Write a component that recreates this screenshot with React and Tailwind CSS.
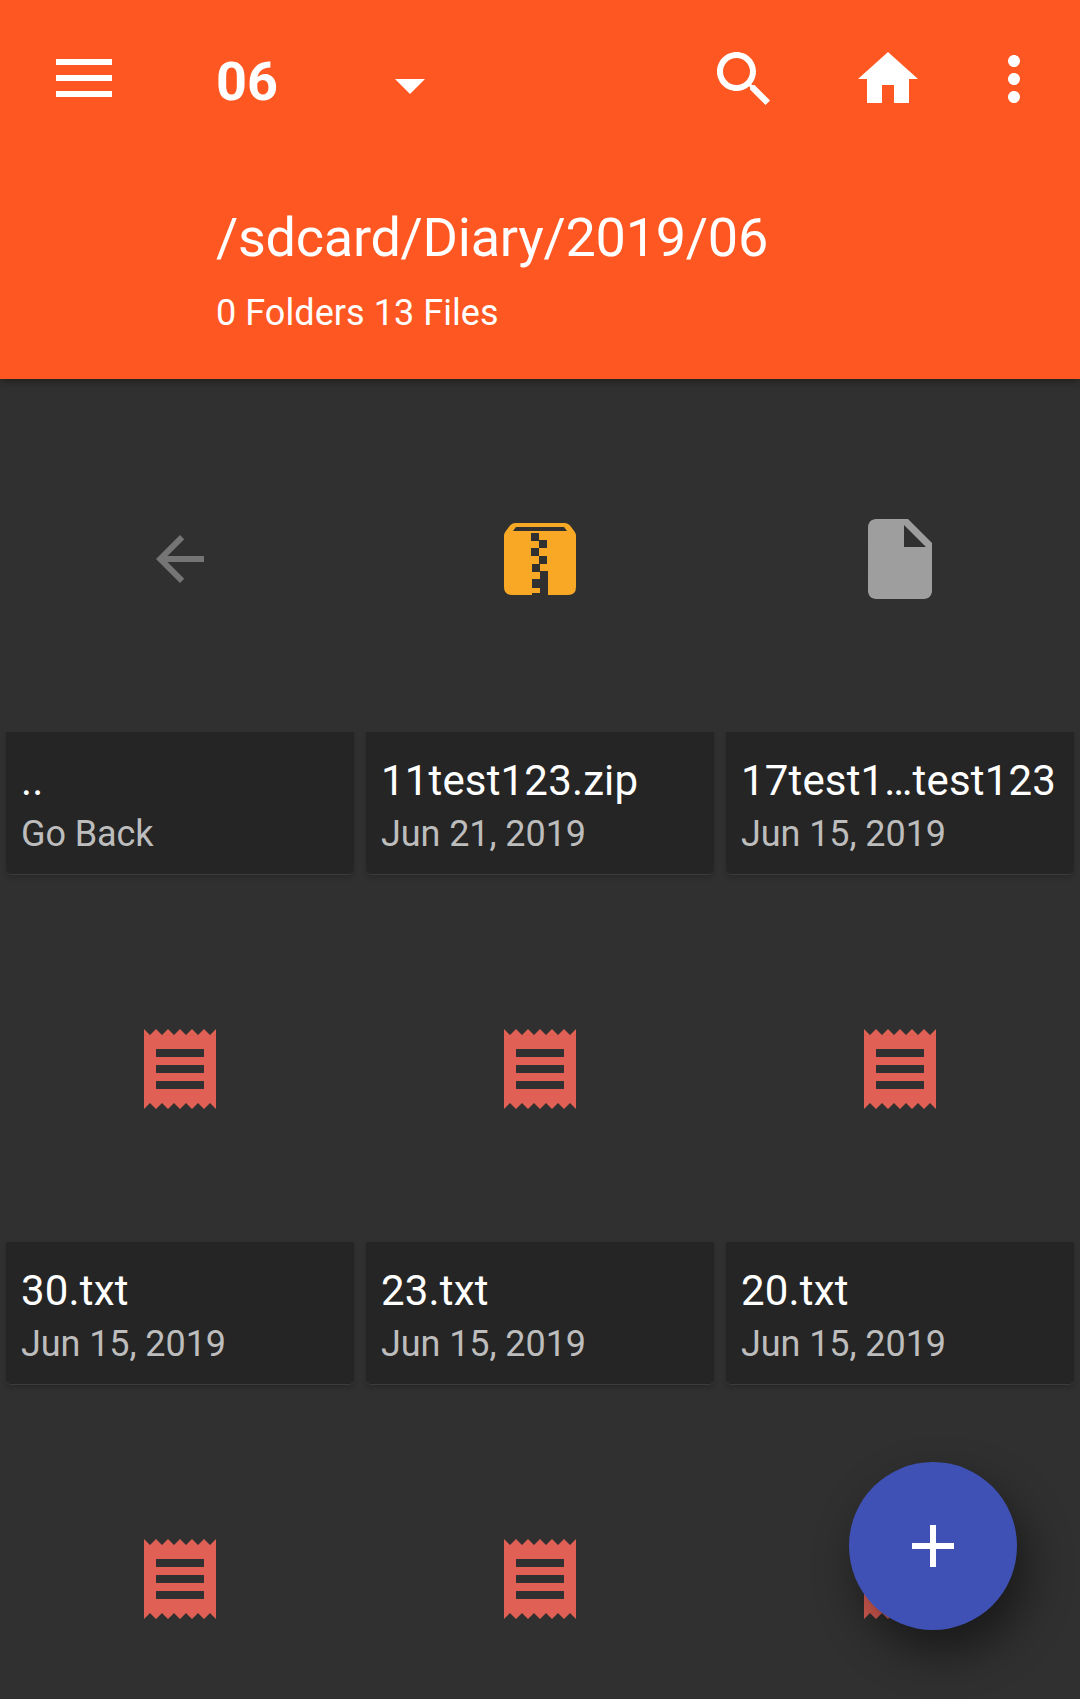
import React from "react";

function MaterialIcon({ d, className }) {
  return (
    <svg viewBox="0 0 24 24" fill="currentColor" className={className}>
      <path d={d} />
    </svg>
  );
}

const paths = {
  search:
    "M15.5 14h-.79l-.28-.27C15.41 12.59 16 11.11 16 9.5 16 5.91 13.09 3 9.5 3S3 5.91 3 9.5 5.91 16 9.5 16c1.61 0 3.09-.59 4.23-1.57l.27.28v.79l5.18 5.18L20.67 19.18l-5.17-5.18zm-6 0C7.01 14 5 11.99 5 9.5S7.01 5 9.5 5 14 7.01 14 9.5 11.99 14 9.5 14z",
  home: "M10 20v-6h4v6h5v-8h3L12 3 2 12h3v8z",
  more: "M12 8c1.1 0 2-.9 2-2s-.9-2-2-2-2 .9-2 2 .9 2 2 2zm0 2c-1.1 0-2 .9-2 2s.9 2 2 2 2-.9 2-2-.9-2-2-2zm0 6c-1.1 0-2 .9-2 2s.9 2 2 2 2-.9 2-2-.9-2-2-2z",
  add: "M19 13h-6v6h-2v-6H5v-2h6V5h2v6h6v2z",
  back: "M20 11H7.83l5.59-5.59L12 4l-8 8 8 8 1.41-1.41L7.83 13H20v-2z",
  file: "M6 2c-1.1 0-1.99.9-1.99 2L4 20c0 1.1.89 2 1.99 2H18c1.1 0 2-.9 2-2V8l-6-6H6zm7 7V3.5L18.5 9H13z",
  receipt:
    "M18 17H6v-2h12v2zm0-4H6v-2h12v2zm0-4H6V7h12v2zM3 22l1.5-1.5L6 22l1.5-1.5L9 22l1.5-1.5L12 22l1.5-1.5L15 22l1.5-1.5L18 22l1.5-1.5L21 22V2l-1.5 1.5L18 2l-1.5 1.5L15 2l-1.5 1.5L12 2l-1.5 1.5L9 2 7.5 3.5 6 2 4.5 3.5 3 2v20z",
};

function ZipIcon() {
  return (
    <svg viewBox="0 0 72 72" className="size-[72px]">
      <path
        fill="#f9a825"
        fillRule="evenodd"
        d="M11 0H61Q64 0 66 2.5L70.500 8.500Q72 10.500 72 13V64Q72 72 64 72H44V48H36V41H43V33H35V25H43V17H35V10H27V18H35V25H27V33H35V41H28V49H36V56H28V65H36V70H28V72H8Q0 72 0 64V13Q0 10.500 1.500 8.500L6 2.500Q8 0 11 0ZM12 4L9 8H63L60 4Z"
      />
    </svg>
  );
}

function FileIcon({ type }) {
  if (type === "zip") return <ZipIcon />;
  if (type === "back") return <MaterialIcon d={paths.back} className="size-[72px] text-[#757575]" />;
  if (type === "file") return <MaterialIcon d={paths.file} className="size-24 text-[#9e9e9e]" />;
  return <MaterialIcon d={paths.receipt} className="size-24 text-[#e06055]" />;
}

const files = [
  { type: "back", name: "..", detail: "Go Back" },
  { type: "zip", name: "11test123.zip", detail: "Jun 21, 2019" },
  { type: "file", name: "17test1…test123", detail: "Jun 15, 2019" },
  { type: "text", name: "30.txt", detail: "Jun 15, 2019" },
  { type: "text", name: "23.txt", detail: "Jun 15, 2019" },
  { type: "text", name: "20.txt", detail: "Jun 15, 2019" },
  { type: "text" },
  { type: "text" },
  { type: "text" },
];

function FileCell({ type, name, detail }) {
  return (
    <div>
      <div className="flex h-[348px] items-center justify-center pt-[2px]">
        <FileIcon type={type} />
      </div>
      {name && (
        <div className="h-[143px] rounded-b-[5px] border-b border-[#3c3c3c] bg-[#252525] pl-[15px] pt-[24px] whitespace-nowrap shadow-[0_3px_4px_rgba(0,0,0,0.16)]">
          <div className="h-[49px] text-[42px] leading-[49px] tracking-[0.16px] text-white">{name}</div>
          <div className="mt-[8px] text-[36px] leading-[42px] tracking-[-0.08px] text-[#bdbdbd]">{detail}</div>
        </div>
      )}
    </div>
  );
}

export default function App() {
  return (
    <div className="relative flex h-[1699px] w-[1080px] flex-col overflow-hidden bg-[#303030] font-['Roboto',sans-serif]">
      <header className="relative z-10 h-[379px] shrink-0 bg-[#ff5722] text-white shadow-[0_2px_8px_rgba(0,0,0,0.4)]">
        <div className="flex h-[158px] items-center pl-[56px] pr-[30px]">
          <button className="mb-[2px] flex flex-col gap-[10px]">
            <span className="h-[6px] w-[56px] bg-white" />
            <span className="h-[6px] w-[56px] bg-white" />
            <span className="h-[6px] w-[56px] bg-white" />
          </button>
          <button className="ml-[104px] flex w-[209px] items-center justify-between">
            <span className="pt-[5px] text-[54px] font-bold leading-[64px]">06</span>
            <svg viewBox="0 0 30 15" className="mt-[14px] h-[15px] w-[30px]" fill="currentColor">
              <path d="M0 0H30L15 15Z" />
            </svg>
          </button>
          <nav className="ml-auto flex items-center">
            <MaterialIcon d={paths.search} className="size-[72px]" />
            <MaterialIcon d={paths.home} className="ml-[72px] size-[72px]" />
            <MaterialIcon d={paths.more} className="ml-[54px] size-[72px]" />
          </nav>
        </div>
        <div className="pl-[216px] pt-[48px]">
          <div className="text-[54px] leading-[64px] tracking-[-0.27px]">/sdcard/Diary/2019/06</div>
          <div className="mt-[22px] text-[36px] leading-[42px] tracking-[0.06px]">0 Folders 13 Files</div>
        </div>
      </header>
      <main className="grid grid-cols-3 gap-x-3 gap-y-[19px] px-[6px] pt-[5px]">
        {files.map((file, i) => (
          <FileCell key={i} {...file} />
        ))}
      </main>
      <button className="absolute left-[849px] top-[1462px] flex size-[168px] items-center justify-center rounded-full bg-[#3f51b5] text-white shadow-[10px_22px_46px_rgba(0,0,0,0.48)]">
        <MaterialIcon d={paths.add} className="size-[72px]" />
      </button>
    </div>
  );
}
